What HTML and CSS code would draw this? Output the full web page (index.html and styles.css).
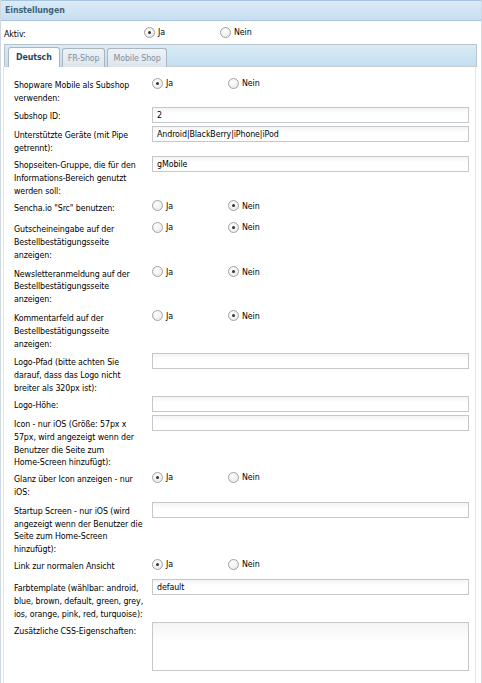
FILE: index.html
```html
<!DOCTYPE html>
<html lang="de">
<head>
<meta charset="utf-8">
<link rel="stylesheet" href="styles.css">
</head>
<body>
<div class="window">
  <div class="header">Einstellungen</div>
  <div class="aktiv">
    <span class="aktiv-label">Aktiv:</span>
    <div class="radios">
      <span class="opt"><span class="radio on"></span>Ja</span>
      <span class="opt"><span class="radio"></span>Nein</span>
    </div>
  </div>
  <div class="tabstrip">
    <span class="tab active">Deutsch</span>
    <span class="tab">FR-Shop</span>
    <span class="tab">Mobile Shop</span>
  </div>
  <div class="panel">
    <div class="row choice"><div class="label">Shopware Mobile als Subshop<br>verwenden:</div>
      <div class="radios"><span class="opt"><span class="radio on"></span>Ja</span><span class="opt"><span class="radio"></span>Nein</span></div></div>
    <div class="row"><div class="label">Subshop ID:</div><div class="input">2</div></div>
    <div class="row"><div class="label">Unterstützte Geräte (mit Pipe<br>getrennt):</div><div class="input">Android|BlackBerry|iPhone|iPod</div></div>
    <div class="row"><div class="label">Shopseiten-Gruppe, die für den<br>Informations-Bereich genutzt<br>werden soll:</div><div class="input">gMobile</div></div>
    <div class="row choice"><div class="label">Sencha.io "Src" benutzen:</div>
      <div class="radios"><span class="opt"><span class="radio"></span>Ja</span><span class="opt"><span class="radio on"></span>Nein</span></div></div>
    <div class="row choice"><div class="label">Gutscheineingabe auf der<br>Bestellbestätigungsseite<br>anzeigen:</div>
      <div class="radios"><span class="opt"><span class="radio"></span>Ja</span><span class="opt"><span class="radio on"></span>Nein</span></div></div>
    <div class="row choice"><div class="label">Newsletteranmeldung auf der<br>Bestellbestätigungsseite<br>anzeigen:</div>
      <div class="radios"><span class="opt"><span class="radio"></span>Ja</span><span class="opt"><span class="radio on"></span>Nein</span></div></div>
    <div class="row choice"><div class="label">Kommentarfeld auf der<br>Bestellbestätigungsseite<br>anzeigen:</div>
      <div class="radios"><span class="opt"><span class="radio"></span>Ja</span><span class="opt"><span class="radio on"></span>Nein</span></div></div>
    <div class="row"><div class="label">Logo-Pfad (bitte achten Sie<br>darauf, dass das Logo nicht<br>breiter als 320px ist):</div><div class="input"></div></div>
    <div class="row"><div class="label">Logo-Höhe:</div><div class="input"></div></div>
    <div class="row"><div class="label">Icon - nur iOS (Größe: 57px x<br>57px, wird angezeigt wenn der<br>Benutzer die Seite zum<br>Home-Screen hinzufügt):</div><div class="input"></div></div>
    <div class="row choice"><div class="label">Glanz über Icon anzeigen - nur<br>iOS:</div>
      <div class="radios"><span class="opt"><span class="radio on"></span>Ja</span><span class="opt"><span class="radio"></span>Nein</span></div></div>
    <div class="row"><div class="label">Startup Screen - nur iOS (wird<br>angezeigt wenn der Benutzer die<br>Seite zum Home-Screen<br>hinzufügt):</div><div class="input"></div></div>
    <div class="row choice"><div class="label">Link zur normalen Ansicht</div>
      <div class="radios"><span class="opt"><span class="radio on"></span>Ja</span><span class="opt"><span class="radio"></span>Nein</span></div></div>
    <div class="row"><div class="label">Farbtemplate (wählbar: android,<br>blue, brown, default, green, grey,<br>ios, orange, pink, red, turquoise):</div><div class="input">default</div></div>
    <div class="row"><div class="label">Zusätzliche CSS-Eigenschaften:</div><div class="input textarea"></div></div>
  </div>
</div>
</body>
</html>
```
FILE: styles.css
```css
html, body {
  margin: 0;
  padding: 0;
  background: #fff;
}
body {
  font-family: "DejaVu Sans Condensed", "Liberation Sans", sans-serif;
  font-size: 8.8px;
  letter-spacing: -0.1px;
  color: #000;
  width: 482px;
  height: 683px;
  overflow: hidden;
}
.window {
  border-left: 1px solid #d0d8e0;
  border-right: 1px solid #d0d8e0;
  height: 683px;
  box-sizing: border-box;
}
.header {
  height: 19px;
  line-height: 19px;
  padding-left: 4px;
  font-weight: bold;
  color: #3e6479;
  border: 1px solid #a7c5e0;
  border-left: 0;
  border-right: 0;
  background: linear-gradient(#dcebf7, #c6def1);
}
.aktiv {
  display: flex;
  height: 23px;
  align-items: flex-start;
  padding-top: 4px;
  box-sizing: border-box;
}
.aktiv-label {
  width: 140px;
  padding-left: 3px;
  padding-top: 4px;
  flex: none;
}
.radios {
  display: flex;
  align-items: flex-start;
  align-self: start;
  padding-top: 1px;
  min-height: 19px;
  box-sizing: border-box;
}
.opt {
  display: flex;
  align-items: center;
  width: 76px;
  line-height: 12px;
}
.radio {
  width: 9px;
  height: 9px;
  border: 1px solid #a3a3a3;
  border-radius: 50%;
  background: radial-gradient(circle at 40% 35%, #fff, #e4e4e4);
  margin-right: 3px;
  box-sizing: content-box;
  position: relative;
  flex: none;
}
.radio.on::after {
  content: "";
  position: absolute;
  left: 3px;
  top: 3px;
  width: 3px;
  height: 3px;
  border-radius: 50%;
  background: #333;
}
.tabstrip {
  margin: 0 4px 0 3px;
  height: 23px;
  box-sizing: border-box;
  border: 1px solid #b8c4cc;
  border-bottom: 1px solid #c8d0d6;
  background: linear-gradient(#d9ebf7, #c4def1);
  display: flex;
  align-items: flex-end;
  padding-left: 3px;
  gap: 2px;
}
.tab {
  height: 19px;
  line-height: 18px;
  padding: 0 5px;
  border: 1px solid #a9b6c0;
  border-bottom: 0;
  border-radius: 3px 3px 0 0;
  background: linear-gradient(#eef2f6, #dde5ec);
  color: #7d8fa6;
  box-sizing: border-box;
  margin-bottom: -1px;
}
.tab.active {
  background: #fff;
  color: #2c4a5e;
  font-weight: bold;
  height: 20px;
  padding: 0 7px;
}
.panel {
  margin: 0 5px 0 2px;
  border-left: 1px solid #e3e6e9;
  border-right: 1px solid #e3e6e9;
  padding: 9px 0 0 10px;
  height: 620px;
  box-sizing: border-box;
}
.row {
  display: grid;
  grid-template-columns: 138px 317px;
  align-items: start;
  margin-bottom: 1px;
}
.row.choice {
  margin-bottom: 2.5px;
}
.label {
  padding-top: 3px;
  line-height: 12.9px;
  white-space: nowrap;
}
.input {
  height: 16px;
  box-sizing: border-box;
  border: 1px solid #c4c7cc;
  background: linear-gradient(#f4f4f4, #fff 40%);
  padding-left: 4px;
  line-height: 14px;
  color: #000;
  margin-bottom: 2px;
}
.textarea {
  height: 49px;
}
```
